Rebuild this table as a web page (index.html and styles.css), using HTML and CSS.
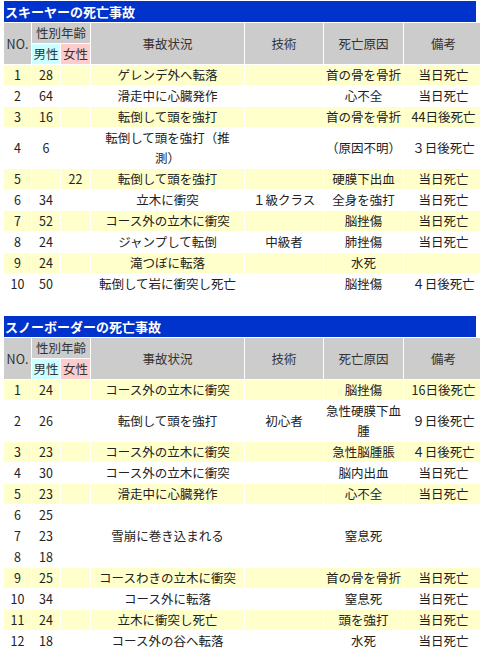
FILE: index.html
```html
<!DOCTYPE html>
<html lang="ja">
<head>
<meta charset="utf-8">
<title>死亡事故</title>
<link rel="stylesheet" href="styles.css">
</head>
<body>
<section class="block">
  <h2 class="title">スキーヤーの死亡事故</h2>
  <table class="acc">
    <colgroup>
      <col class="c-no"><col class="c-m"><col class="c-f"><col class="c-sit"><col class="c-tech"><col class="c-cause"><col class="c-note">
    </colgroup>
    <thead>
      <tr><th rowspan="2">NO.</th><th colspan="2">性別年齢</th><th rowspan="2">事故状況</th><th rowspan="2">技術</th><th rowspan="2">死亡原因</th><th rowspan="2">備考</th></tr>
      <tr><th class="male">男性</th><th class="female">女性</th></tr>
    </thead>
    <tbody>
      <tr class="hl"><td>1</td><td>28</td><td></td><td>ゲレンデ外へ転落</td><td></td><td>首の骨を骨折</td><td>当日死亡</td></tr>
      <tr><td>2</td><td>64</td><td></td><td>滑走中に心臓発作</td><td></td><td>心不全</td><td>当日死亡</td></tr>
      <tr class="hl"><td>3</td><td>16</td><td></td><td>転倒して頭を強打</td><td></td><td>首の骨を骨折</td><td>44日後死亡</td></tr>
      <tr><td>4</td><td>6</td><td></td><td>転倒して頭を強打（推<br>測）</td><td></td><td>（原因不明）</td><td>３日後死亡</td></tr>
      <tr class="hl"><td>5</td><td></td><td>22</td><td>転倒して頭を強打</td><td></td><td>硬膜下出血</td><td>当日死亡</td></tr>
      <tr><td>6</td><td>34</td><td></td><td>立木に衝突</td><td>１級クラス</td><td>全身を強打</td><td>当日死亡</td></tr>
      <tr class="hl"><td>7</td><td>52</td><td></td><td>コース外の立木に衝突</td><td></td><td>脳挫傷</td><td>当日死亡</td></tr>
      <tr><td>8</td><td>24</td><td></td><td>ジャンプして転倒</td><td>中級者</td><td>肺挫傷</td><td>当日死亡</td></tr>
      <tr class="hl"><td>9</td><td>24</td><td></td><td>滝つぼに転落</td><td></td><td>水死</td><td></td></tr>
      <tr><td>10</td><td>50</td><td></td><td>転倒して岩に衝突し死亡</td><td></td><td>脳挫傷</td><td>４日後死亡</td></tr>
    </tbody>
  </table>
</section>
<section class="block second">
  <h2 class="title">スノーボーダーの死亡事故</h2>
  <table class="acc">
    <colgroup>
      <col class="c-no"><col class="c-m"><col class="c-f"><col class="c-sit"><col class="c-tech"><col class="c-cause"><col class="c-note">
    </colgroup>
    <thead>
      <tr><th rowspan="2">NO.</th><th colspan="2">性別年齢</th><th rowspan="2">事故状況</th><th rowspan="2">技術</th><th rowspan="2">死亡原因</th><th rowspan="2">備考</th></tr>
      <tr><th class="male">男性</th><th class="female">女性</th></tr>
    </thead>
    <tbody>
      <tr class="hl"><td>1</td><td>24</td><td></td><td>コース外の立木に衝突</td><td></td><td>脳挫傷</td><td>16日後死亡</td></tr>
      <tr><td>2</td><td>26</td><td></td><td>転倒して頭を強打</td><td>初心者</td><td>急性硬膜下血腫</td><td>９日後死亡</td></tr>
      <tr class="hl"><td>3</td><td>23</td><td></td><td>コース外の立木に衝突</td><td></td><td>急性脳腫脹</td><td>４日後死亡</td></tr>
      <tr><td>4</td><td>30</td><td></td><td>コース外の立木に衝突</td><td></td><td>脳内出血</td><td>当日死亡</td></tr>
      <tr class="hl"><td>5</td><td>23</td><td></td><td>滑走中に心臓発作</td><td></td><td>心不全</td><td>当日死亡</td></tr>
      <tr><td>6</td><td>25</td><td></td><td rowspan="3">雪崩に巻き込まれる</td><td rowspan="3"></td><td rowspan="3">窒息死</td><td rowspan="3"></td></tr>
      <tr><td>7</td><td>23</td><td></td></tr>
      <tr><td>8</td><td>18</td><td></td></tr>
      <tr class="hl"><td>9</td><td>25</td><td></td><td>コースわきの立木に衝突</td><td></td><td>首の骨を骨折</td><td>当日死亡</td></tr>
      <tr><td>10</td><td>34</td><td></td><td>コース外に転落</td><td></td><td>窒息死</td><td>当日死亡</td></tr>
      <tr class="hl"><td>11</td><td>24</td><td></td><td>立木に衝突し死亡</td><td></td><td>頭を強打</td><td>当日死亡</td></tr>
      <tr><td>12</td><td>18</td><td></td><td>コース外の谷へ転落</td><td></td><td>水死</td><td>当日死亡</td></tr>
    </tbody>
  </table>
</section>
</body>
</html>
```
FILE: styles.css
```css
html, body {
  margin: 0;
  padding: 0;
  background: #ffffff;
}
body {
  padding: 1px 4px 0;
  font-family: "Noto Sans CJK JP", "Noto Sans", sans-serif;
  font-size: 12.5px;
  color: #222222;
}
.block.second {
  margin-top: 21px;
}
.title {
  margin: 0;
  height: 21px;
  line-height: 21px;
  padding: 0 1px;
  background: #0033cc;
  color: #ffffff;
  font-size: 13px;
  font-weight: bold;
}
.acc {
  width: 474px;
  margin: 0 -1px;
  table-layout: fixed;
  border-collapse: separate;
  border-spacing: 1px;
  background: #ffffff;
}
.c-no { width: 27px; }
.c-m { width: 28px; }
.c-f { width: 29px; }
.c-sit { width: 153px; }
.c-tech { width: 78px; }
.c-cause { width: 79px; }
.c-note { width: 79px; }
.acc th,
.acc td {
  padding: 0 1px;
  height: 20px;
  line-height: 20px;
  text-align: center;
  vertical-align: middle;
  font-weight: normal;
  white-space: normal;
}
.acc th {
  background: #cccccc;
  color: #333333;
}
.acc th.male {
  background: #ccffff;
}
.acc th.female {
  background: #ffcccc;
}
.acc tr.hl td {
  background: #ffffcc;
}
```
